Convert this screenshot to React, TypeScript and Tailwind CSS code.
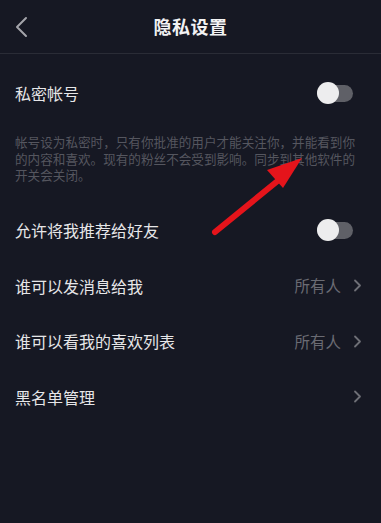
import React from 'react'

function Toggle() {
  return (
    <div className="relative w-[36px] h-[22px] flex items-center">
      <div className="absolute left-0 right-0 h-[17px] rounded-full bg-[#5f6067]" />
      <div className="relative w-[22px] h-[22px] rounded-full bg-[#ededee]" />
    </div>
  )
}

function Chevron() {
  return (
    <svg width="9" height="13" viewBox="0 0 9 13" fill="none">
      <path d="M2 1.5L7 6.5L2 11.5" stroke="#6e6f76" strokeWidth="1.8" strokeLinecap="round" strokeLinejoin="round" />
    </svg>
  )
}

function Row({ label, value, toggle }: { label: string; value?: string; toggle?: boolean }) {
  return (
    <div className="h-[55.5px] flex items-center justify-between pl-[15px] pr-[19px]">
      <span className="text-[16px] text-[#e6e6e8]">{label}</span>
      {toggle ? (
        <div className="mr-[9px]">
          <Toggle />
        </div>
      ) : (
        <div className="flex items-center gap-[12px]">
          {value && <span className="text-[15.5px] text-[#6a6b73]">{value}</span>}
          <Chevron />
        </div>
      )}
    </div>
  )
}

export default function App() {
  return (
    <div
      className="relative w-[381px] h-[523px] overflow-hidden bg-[#161823]"
      style={{ fontFamily: '"Noto Sans CJK SC", "Noto Sans", sans-serif' }}
    >
      <div className="relative h-[54px] flex items-center justify-center border-b border-[#2a2c36]">
        <svg className="absolute left-[14px] top-[16px]" width="16" height="22" viewBox="0 0 16 22" fill="none">
          <path d="M12 2L3 11L12 20" stroke="#a3a4aa" strokeWidth="2" strokeLinecap="round" strokeLinejoin="round" />
        </svg>
        <h1 className="text-[18px] font-bold text-[#f2f2f3] tracking-[0.5px]">隐私设置</h1>
      </div>

      <div className="h-[78px] flex items-center justify-between pl-[15px] pr-[28px]">
        <span className="text-[16px] text-[#e6e6e8]">私密帐号</span>
        <Toggle />
      </div>

      <p className="mt-[2px] pl-[15px] w-[362px] text-[12.6px] leading-[16.5px] text-[#55565f]">
        帐号设为私密时，只有你批准的用户才能关注你，并能看到你的内容和喜欢。现有的粉丝不会受到影响。同步到其他软件的开关会关闭。
      </p>

      <div className="mt-[19px]">
        <Row label="允许将我推荐给好友" toggle />
        <Row label="谁可以发消息给我" value="所有人" />
        <Row label="谁可以看我的喜欢列表" value="所有人" />
        <Row label="黑名单管理" />
      </div>

      <svg className="absolute left-0 top-0 pointer-events-none" width="381" height="523" viewBox="0 0 381 523">
        <line x1="215" y1="232" x2="280" y2="179" stroke="#e5141b" strokeWidth="6" strokeLinecap="round" />
        <polygon points="302,158 267,170 283,188" fill="#e5141b" />
      </svg>
    </div>
  )
}
